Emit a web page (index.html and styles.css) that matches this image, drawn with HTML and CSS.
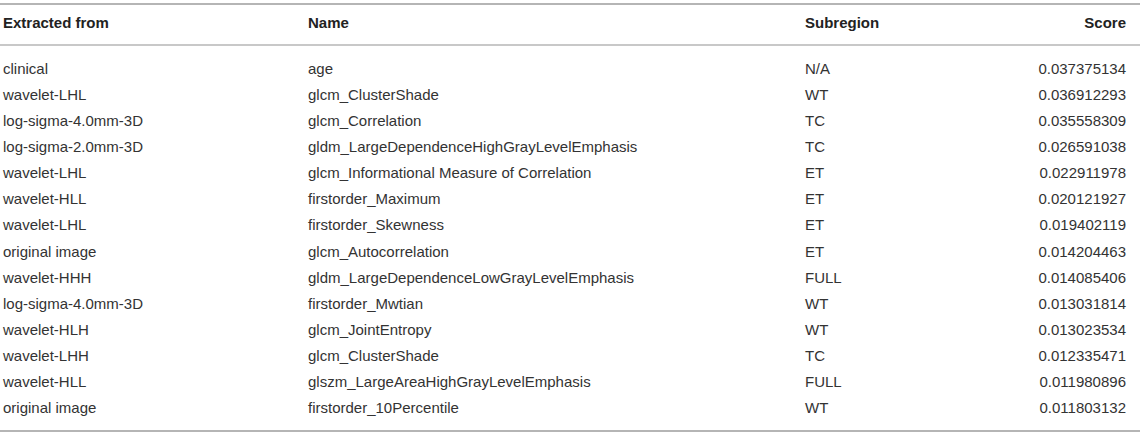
FILE: index.html
```html
<!DOCTYPE html>
<html>
<head>
<meta charset="utf-8">
<link rel="stylesheet" href="styles.css">
</head>
<body>
<div class="wrap">
<table class="tbl">
<thead>
<tr><th class="c1">Extracted from</th><th class="c2">Name</th><th class="c3">Subregion</th><th class="c4">Score</th></tr>
</thead>
<tbody>
<tr><td>clinical</td><td>age</td><td>N/A</td><td class="num">0.037375134</td></tr>
<tr><td>wavelet-LHL</td><td>glcm_ClusterShade</td><td>WT</td><td class="num">0.036912293</td></tr>
<tr><td>log-sigma-4.0mm-3D</td><td>glcm_Correlation</td><td>TC</td><td class="num">0.035558309</td></tr>
<tr><td>log-sigma-2.0mm-3D</td><td>gldm_LargeDependenceHighGrayLevelEmphasis</td><td>TC</td><td class="num">0.026591038</td></tr>
<tr><td>wavelet-LHL</td><td>glcm_Informational Measure of Correlation</td><td>ET</td><td class="num">0.022911978</td></tr>
<tr><td>wavelet-HLL</td><td>firstorder_Maximum</td><td>ET</td><td class="num">0.020121927</td></tr>
<tr><td>wavelet-LHL</td><td>firstorder_Skewness</td><td>ET</td><td class="num">0.019402119</td></tr>
<tr><td>original image</td><td>glcm_Autocorrelation</td><td>ET</td><td class="num">0.014204463</td></tr>
<tr><td>wavelet-HHH</td><td>gldm_LargeDependenceLowGrayLevelEmphasis</td><td>FULL</td><td class="num">0.014085406</td></tr>
<tr><td>log-sigma-4.0mm-3D</td><td>firstorder_Mwtian</td><td>WT</td><td class="num">0.013031814</td></tr>
<tr><td>wavelet-HLH</td><td>glcm_JointEntropy</td><td>WT</td><td class="num">0.013023534</td></tr>
<tr><td>wavelet-LHH</td><td>glcm_ClusterShade</td><td>TC</td><td class="num">0.012335471</td></tr>
<tr><td>wavelet-HLL</td><td>glszm_LargeAreaHighGrayLevelEmphasis</td><td>FULL</td><td class="num">0.011980896</td></tr>
<tr><td>original image</td><td>firstorder_10Percentile</td><td>WT</td><td class="num">0.011803132</td></tr>
</tbody>
</table>
</div>
</body>
</html>
```
FILE: styles.css
```css
html, body { margin: 0; padding: 0; background: #fff; }
.wrap { padding-top: 3px; width: 1140px; }
.tbl {
  width: 1140px;
  border-collapse: collapse;
  table-layout: fixed;
  font-family: "Liberation Sans", Arial, sans-serif;
  font-size: 15px;
  color: #333;
  border-top: 2px solid #b5b5b5;
  border-bottom: 2px solid #b5b5b5;
}
.tbl th {
  font-weight: bold;
  text-align: left;
  height: 35px;
  padding: 0 0 4px 3px;
  border-bottom: 2px solid #c8c8c8;
  vertical-align: middle;
  color: #222;
}
.tbl .c1 { width: 302px; }
.tbl .c2 { width: 494px; }
.tbl .c3 { width: 230px; }
.tbl .c4 { text-align: right; padding-right: 14px; }
.tbl td {
  height: 26.15px;
  padding: 0 0 0 3px;
  vertical-align: middle;
  white-space: nowrap;
}
.tbl td.num { text-align: right; padding-right: 14px; }
.tbl tbody tr:first-child td { padding-top: 9px; }
.tbl tbody tr:last-child td { padding-bottom: 9px; }
```
